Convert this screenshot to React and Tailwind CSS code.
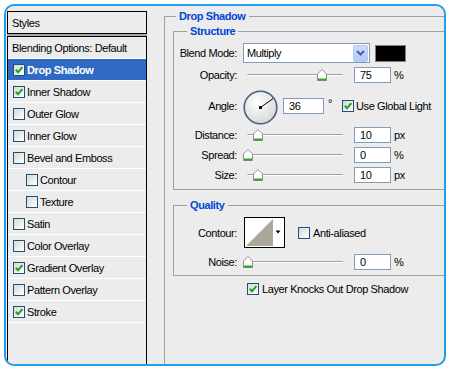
import React from "react";

const styleItems = [
  { label: "Drop Shadow", checked: true, active: true },
  { label: "Inner Shadow", checked: true },
  { label: "Outer Glow" },
  { label: "Inner Glow" },
  { label: "Bevel and Emboss" },
  { label: "Contour", indent: true },
  { label: "Texture", indent: true },
  { label: "Satin" },
  { label: "Color Overlay" },
  { label: "Gradient Overlay", checked: true },
  { label: "Pattern Overlay" },
  { label: "Stroke", checked: true },
];

const CheckBox = ({ checked }) => (
  <span className="w-[12px] h-[12px] shrink-0 border border-[#1c5180] bg-linear-to-br from-[#d8d8d0] to-white flex items-center justify-center">
    {checked && (
      <svg width="10" height="10" viewBox="0 0 10 10">
        <path d="M1.8 4.8 L4 7.2 L8.4 2.2" fill="none" stroke="#21a121" strokeWidth="2" />
      </svg>
    )}
  </span>
);

const Slider = ({ pos }) => (
  <div className="relative w-[104px] h-[12px] flex items-center">
    <div className="mx-[4px] flex-1 h-[2px] rounded-l-full border-t border-[#a3a19a] bg-white" />
    <svg className="absolute top-0" style={{ left: pos }} width="10" height="12" viewBox="0 0 10 12">
      <path d="M5 0.5 L9.5 5 V11.5 H0.5 V5 Z" fill="#fff" stroke="#8f8f8f" />
      <path d="M1 10.5 H9" stroke="#2ea52e" strokeWidth="2" />
    </svg>
  </div>
);

const ValueBox = ({ value, className = "w-[37px]" }) => (
  <span className={`${className} h-[16px] border border-[#7f9db9] bg-white pl-[5px] flex items-center`}>
    {value}
  </span>
);

const SliderRow = ({ label, value, unit, pos, className = "" }) => (
  <div className={`flex items-center h-[16px] ${className}`}>
    <span className="w-[63px] text-right">{label}</span>
    <div className="ml-[6px]">
      <Slider pos={pos} />
    </div>
    <span className="ml-[7px]">
      <ValueBox value={value} />
    </span>
    <span className="ml-[3px]">{unit}</span>
  </div>
);

const GroupBox = ({ title, className = "", children }) => (
  <fieldset className={`border-t border-l border-b border-[#a5a295] ${className}`}>
    <legend className="ml-[13px] px-[3px] font-bold text-[#0046d5] leading-[14px]">{title}</legend>
    {children}
  </fieldset>
);

const Dial = () => (
  <svg width="35" height="35" viewBox="0 0 35 35">
    <defs>
      <radialGradient id="dialFill" cx="40%" cy="35%" r="70%">
        <stop offset="0" stopColor="#ffffff" />
        <stop offset="1" stopColor="#d6d6d6" />
      </radialGradient>
    </defs>
    <circle cx="17.5" cy="17.5" r="16.3" fill="url(#dialFill)" stroke="#4b5d82" strokeWidth="1.6" />
    <line x1="17.5" y1="17.5" x2="30" y2="8.6" stroke="#000" />
    <rect x="16" y="16" width="3" height="3" fill="#000" />
  </svg>
);

const ContourPicker = () => (
  <svg width="41" height="31" viewBox="0 0 41 31">
    <rect x="0.5" y="0.5" width="40" height="30" fill="#fff" stroke="#000" />
    <polygon points="2,29 29,2 29,29" fill="#aca899" />
    <polygon points="31.5,13.5 36.5,13.5 34,16.5" fill="#000" />
  </svg>
);

export default function App() {
  return (
    <div className="w-[450px] h-[370px] bg-white p-[4px] font-['Liberation_Sans',Arial,sans-serif] text-[11px] leading-[14px] tracking-[-0.4px] text-black">
      <div className="h-full border-2 border-[#1fa0ea] rounded-[10px] bg-[#ececec] overflow-hidden flex">
        {/* left: styles list */}
        <div className="ml-[1px] mt-[5px] w-[140px] flex flex-col">
          <div className="h-[23px] border border-black flex items-center pl-[4px]">Styles</div>
          <div className="h-[2px] bg-[#a8a8a8]" />
          <div className="flex-1 border-x border-t border-black">
            <div className="h-[22px] border-b border-white flex items-center pl-[4px]">
              Blending Options: Default
            </div>
            {styleItems.map((item) => (
              <div
                key={item.label}
                className={`h-[22px] border-b border-white flex items-center ${
                  item.active ? "bg-[#316ac5] text-white font-bold" : ""
                } ${item.indent ? "pl-[18px]" : "pl-[5px]"}`}
              >
                <CheckBox checked={item.checked} />
                <span className="ml-[2px]">{item.label}</span>
              </div>
            ))}
          </div>
        </div>

        {/* right: drop shadow settings */}
        <div className="flex-1 pl-[17px] pt-[3px] flex flex-col">
          <fieldset className="flex-1 border-t border-l border-[#a5a295]">
            <legend className="ml-[11px] px-[3px] font-bold text-[#0046d5] leading-[14px]">Drop Shadow</legend>
            <div className="pl-[8px] pt-[1px]">
              <GroupBox title="Structure">
                <div className="pt-[5px] pb-[6px] flex flex-col">
                  <div className="flex items-center h-[20px]">
                    <span className="w-[63px] text-right">Blend Mode:</span>
                    <div className="ml-[6px] w-[127px] h-[20px] border border-[#7f9db9] bg-white flex items-center">
                      <span className="pl-[3px]">Multiply</span>
                      <span className="ml-auto mr-[1px] w-[15px] h-[17px] rounded-[2px] border border-[#b4c8f2] bg-linear-to-b from-[#cddbfd] to-[#b3c9f8] flex items-center justify-center">
                        <svg width="9" height="6" viewBox="0 0 9 6">
                          <path d="M1 1 L4.5 4.5 L8 1" fill="none" stroke="#4d6185" strokeWidth="2" />
                        </svg>
                      </span>
                    </div>
                    <span className="ml-[5px] w-[31px] h-[17px] bg-black border border-[#808080]" />
                  </div>

                  <SliderRow label="Opacity:" value="75" unit="%" pos={74} className="mt-[4px]" />

                  <div className="flex items-center h-[35px] mt-[7px]">
                    <span className="w-[63px] text-right mb-[4px]">Angle:</span>
                    <span className="ml-[6px]">
                      <Dial />
                    </span>
                    <span className="ml-[5px] mb-[4px]">
                      <ValueBox value="36" className="w-[41px]" />
                    </span>
                    <span className="ml-[4px] mb-[10px]">°</span>
                    <span className="ml-[10px] mb-[4px] flex items-center">
                      <CheckBox checked />
                      <span className="ml-[2px]">Use Global Light</span>
                    </span>
                  </div>

                  <SliderRow label="Distance:" value="10" unit="px" pos={10} className="mt-[2px]" />
                  <SliderRow label="Spread:" value="0" unit="%" pos={0} className="mt-[4px]" />
                  <SliderRow label="Size:" value="10" unit="px" pos={10} className="mt-[4px]" />
                </div>
              </GroupBox>

              <GroupBox title="Quality" className="mt-[8px]">
                <div className="pt-[5px] pb-[5px] flex flex-col">
                  <div className="flex items-center h-[31px]">
                    <span className="w-[63px] text-right">Contour:</span>
                    <span className="ml-[7px]">
                      <ContourPicker />
                    </span>
                    <span className="ml-[13px] flex items-center">
                      <CheckBox />
                      <span className="ml-[3px]">Anti-aliased</span>
                    </span>
                  </div>
                  <SliderRow label="Noise:" value="0" unit="%" pos={0} className="mt-[6px]" />
                </div>
              </GroupBox>

              <div className="mt-[7px] ml-[74px] h-[12px] flex items-center">
                <CheckBox checked />
                <span className="ml-[3px]">Layer Knocks Out Drop Shadow</span>
              </div>
            </div>
          </fieldset>
        </div>
      </div>
    </div>
  );
}
